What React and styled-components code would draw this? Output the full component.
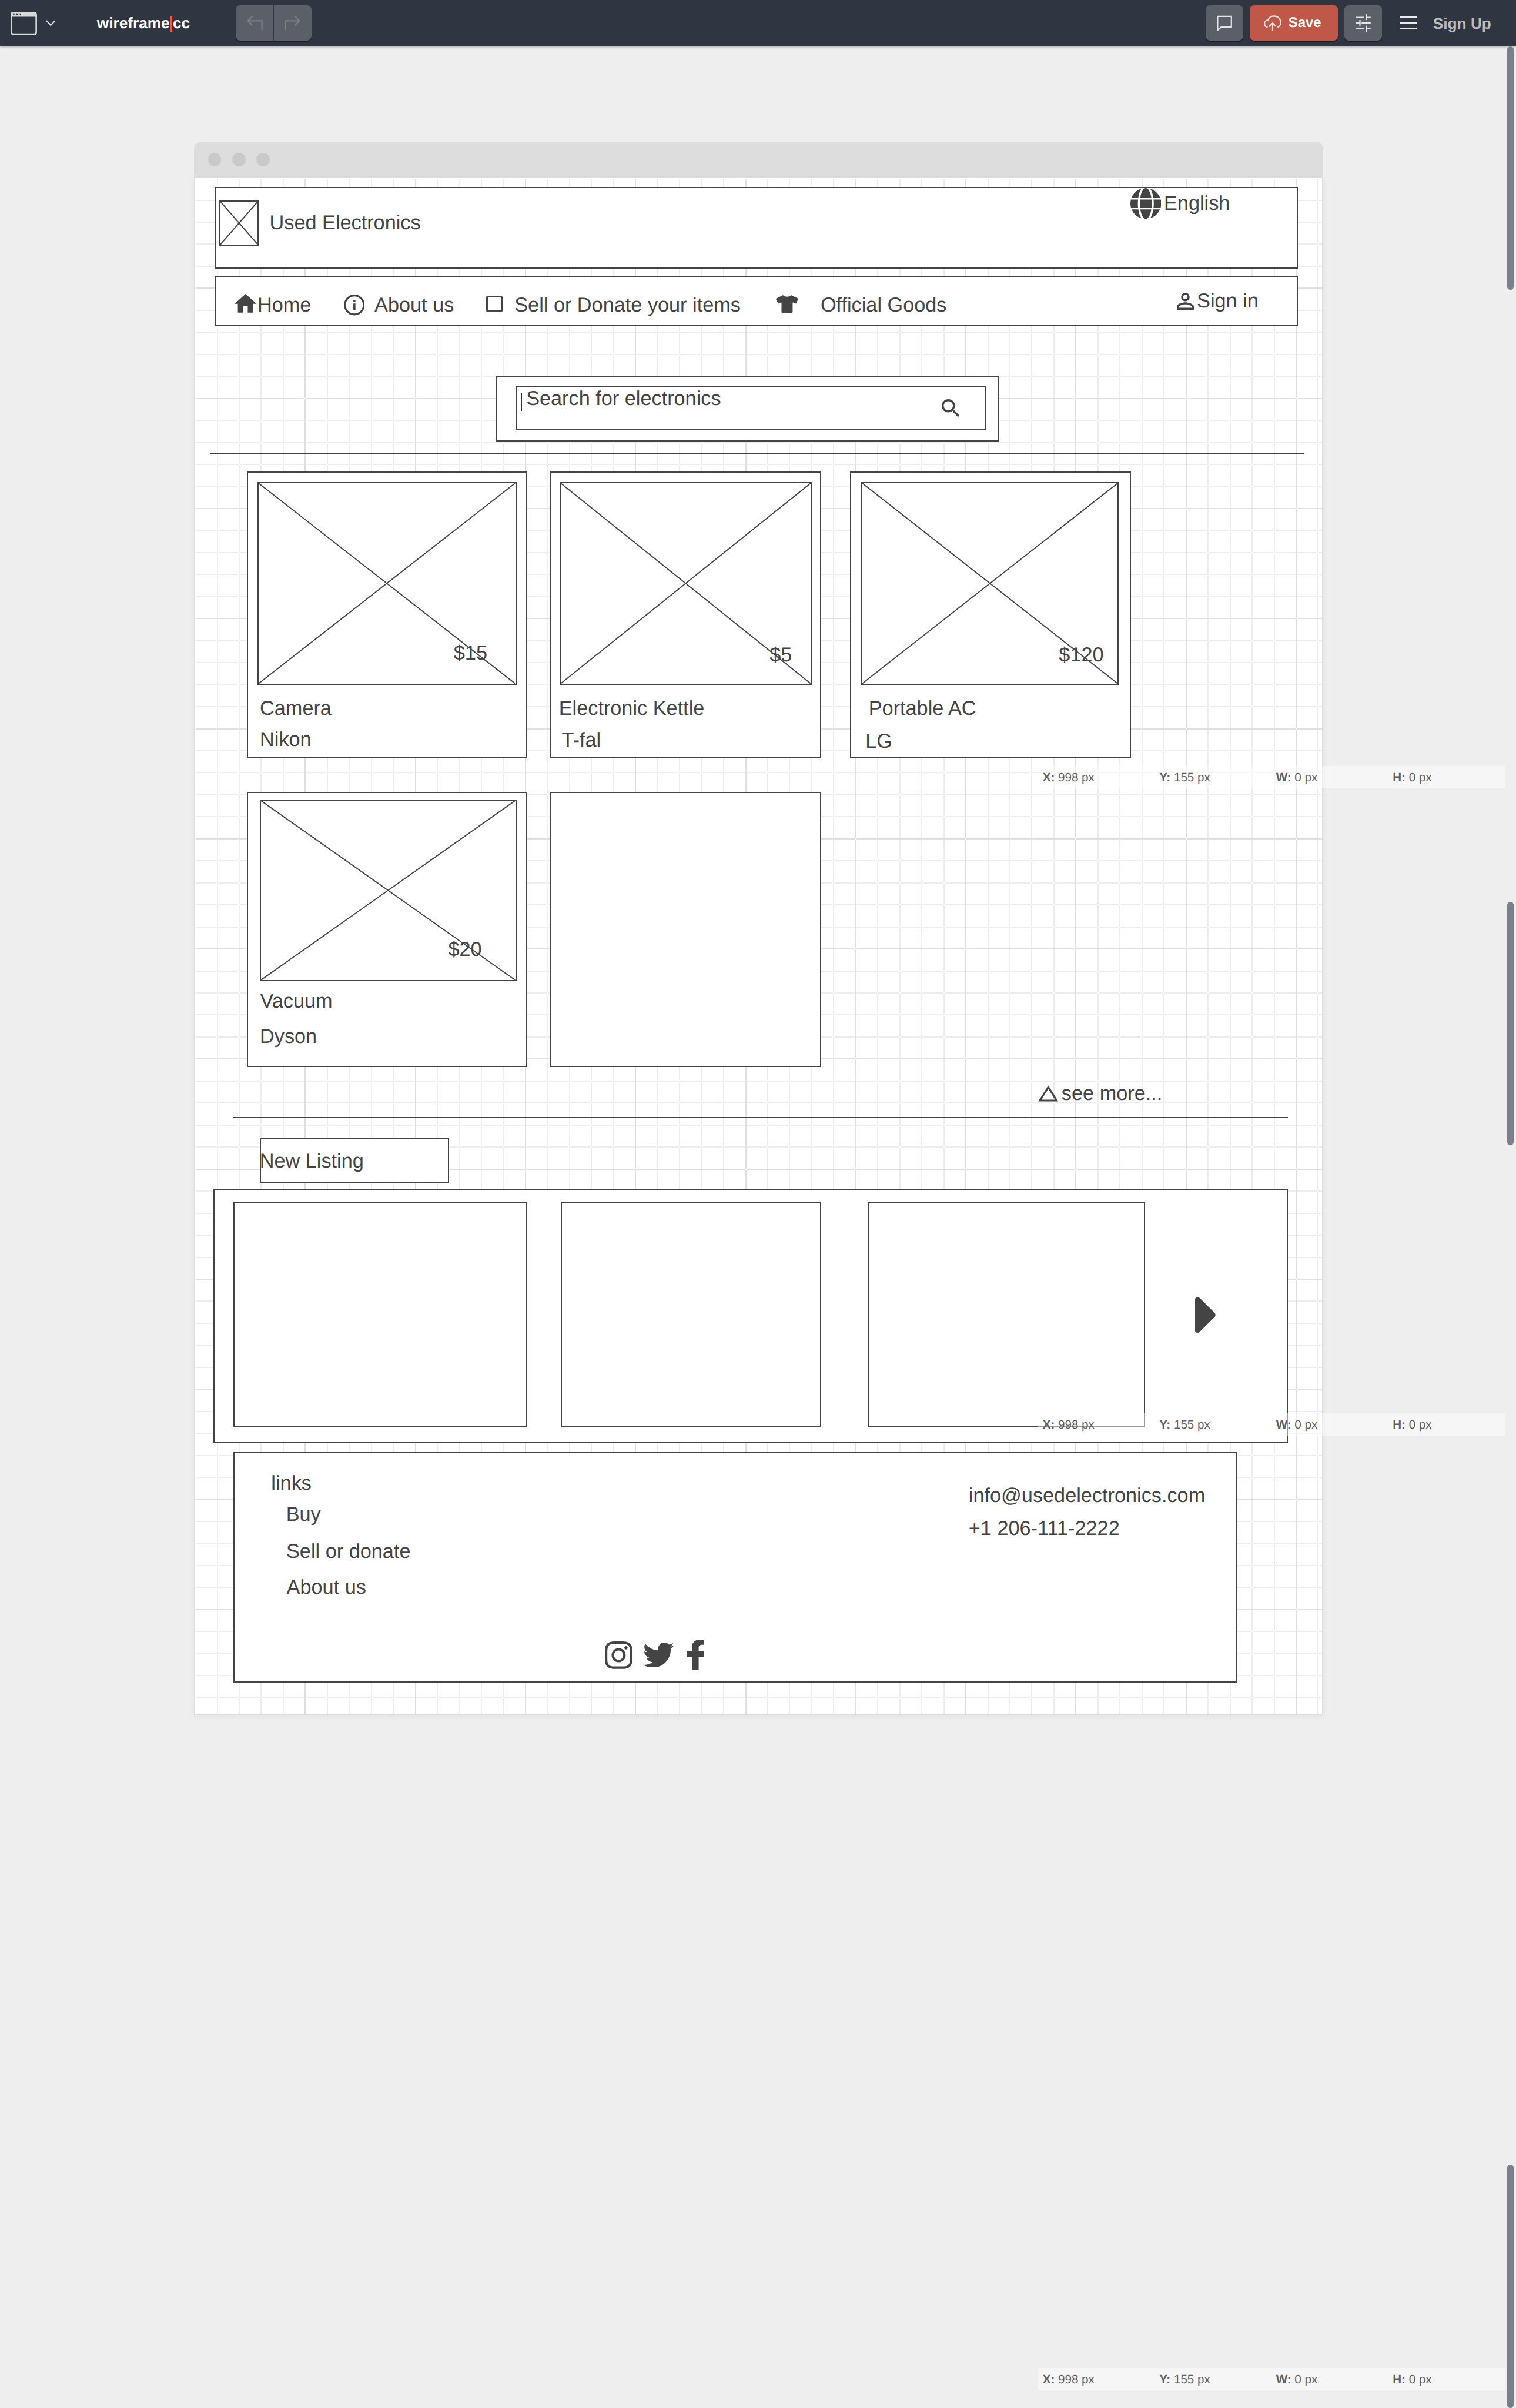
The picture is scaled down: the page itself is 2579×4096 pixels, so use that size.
import React from "react";
import styled, { createGlobalStyle } from "styled-components";
import { FaGlobe, FaTshirt, FaInstagram, FaTwitter, FaFacebookF } from "react-icons/fa";
import { MdHome, MdPersonOutline, MdSearch } from "react-icons/md";

const SCALE = 2579 / 2754;
const u = (n) => `${(n * SCALE).toFixed(3)}px`;

const INK = "#444444";
const LINE = "2px";

const GlobalStyle = createGlobalStyle`
  *, *::before, *::after { box-sizing: border-box; }
  html, body { margin: 0; padding: 0; background: #eeeeee; }
  body {
    font-family: "Liberation Sans", Arial, sans-serif;
    color: ${INK};
    text-rendering: geometricPrecision;
  }
  svg { display: block; flex: none; }
`;

const Page = styled.div`
  position: relative;
  width: ${u(2754)};
  height: 4096px;
  overflow: hidden;
  background: #eeeeee;
`;

/* ---------- toolbar ---------- */

const Toolbar = styled.header`
  position: relative;
  display: flex;
  align-items: flex-start;
  height: ${u(84)};
  padding: ${u(10)} ${u(45)} 0 ${u(19)};
  background: #2f3541;
  box-shadow: 0 1px 4px rgba(0, 0, 0, 0.3);
`;

const ToolGroup = styled.div`
  display: flex;
  align-items: center;
  height: ${u(64)};
  gap: ${(p) => u(p.$gap || 0)};
  margin-left: ${(p) => (p.$push ? "auto" : u(p.$ml || 0))};
`;

const Logo = styled.div`
  display: flex;
  align-items: center;
  width: ${u(252)};
  height: ${u(64)};
  margin-left: ${u(75)};
  padding-top: ${u(2)};
  font-size: ${u(28)};
  font-weight: 700;
  line-height: ${u(32)};
  color: #ffffff;
`;

const LogoBar = styled.span`
  width: 3px;
  height: ${u(28)};
  margin: ${u(1)} ${u(1)} 0 ${u(1.5)};
  background: #f05a40;
`;

const ToolButton = styled.button`
  display: flex;
  align-items: center;
  justify-content: center;
  gap: ${u(13)};
  width: ${(p) => u(p.$w || 68)};
  height: ${u(64)};
  padding: 0 ${(p) => u(p.$primary ? 5 : 0)} 0 0;
  border: 0;
  border-radius: ${(p) => p.$radius || u(8)};
  background: ${(p) => (p.$primary ? "#bf5848" : "#5b5f68")};
  box-shadow: 0 2px 0 #1b1d20;
  color: #ffffff;
  font: 700 ${u(25.5)} "Liberation Sans", Arial, sans-serif;
  text-rendering: inherit;
`;

const SignUp = styled.a`
  margin-left: ${u(18)};
  padding-top: ${u(2)};
  font-size: ${u(28)};
  font-weight: 700;
  color: #bbbbbb;
  white-space: nowrap;
`;

const Glyph = ({ w, h, box, children, color = "#e3e4e6", sw = 2.4 }) => (
  <svg
    width={w * SCALE}
    height={h * SCALE}
    viewBox={box || `0 0 ${w} ${h}`}
    fill="none"
    stroke={color}
    strokeWidth={sw}
  >
    {children}
  </svg>
);

/* ---------- browser window ---------- */

const Browser = styled.main`
  width: ${u(2052)};
  margin: ${u(174)} 0 0 ${u(352)};
`;

const BrowserBar = styled.div`
  display: flex;
  align-items: center;
  gap: ${u(20)};
  height: ${u(66)};
  padding: 0 0 ${u(2)} ${u(26)};
  border-radius: ${u(11)} ${u(11)} 0 0;
  background: #dddddd;
`;

const Dot = styled.i`
  width: ${u(24)};
  height: ${u(24)};
  border-radius: 50%;
  background: #c9c9c9;
`;

const Canvas = styled.div`
  position: relative;
  height: ${u(2792)};
  border: solid #dddddd;
  border-width: 0 ${LINE} ${LINE};
  background: #ffffff;
  box-shadow: 0 2px 10px rgba(0, 0, 0, 0.05);
`;

const GridSvg = styled.svg`
  position: absolute;
  inset: 0;
`;

const Content = styled.div`
  position: relative;
  display: flow-root;
`;

/* ---------- wireframe parts ---------- */

const Label = styled.span`
  display: block;
  flex: none;
  height: ${u(44)};
  margin: ${(p) => u(p.$mt || 0)} 0 0 ${(p) => u((p.$ml || 0) + 1.4)};
  font-size: ${u(36.6)};
  line-height: ${u(48.6)};
  white-space: nowrap;
  color: ${INK};
`;

const Frame = styled.section`
  position: relative;
  display: flex;
  flex: none;
  align-items: flex-start;
  width: ${(p) => u(p.$w)};
  height: ${(p) => u(p.$h)};
  margin: ${(p) => u(p.$mt || 0)} 0 0 ${(p) => u(p.$ml || 0)};
  border: ${LINE} solid ${INK};
  background: #ffffff;
`;

const Rule = styled.hr`
  width: ${(p) => u(p.$w)};
  height: 2px;
  margin: ${(p) => u(p.$mt)} 0 0 ${(p) => u(p.$ml)};
  border: 0;
  background: ${INK};
`;

const IconSlot = styled.span`
  display: block;
  flex: none;
  width: ${(p) => u(p.$w)};
  height: ${(p) => u(p.$h)};
  margin: ${(p) => u(p.$mt || 0)} 0 0 ${(p) => u(p.$ml || 0)};
  color: ${INK};

  svg {
    width: 100%;
    height: 100%;
  }
`;

const Language = styled.div`
  display: flex;
  width: ${u(303)};
  margin-left: auto;
`;

const NavFrame = styled(Frame)`
  display: grid;
  grid-template-columns: ${u(202)} ${u(258)} ${u(528)} ${u(728)} 1fr;
  padding-left: ${u(30)};
`;

const NavItem = styled.div`
  display: flex;
  align-items: flex-start;
`;

const SearchFrame = styled(Frame)`
  padding: ${u(18)} 0 0 ${u(34)};
`;

const Caret = styled.i`
  width: 2px;
  height: ${u(32)};
  margin: ${u(10)} 0 0 ${u(8)};
  background: #333333;
`;

const SearchIcon = styled(IconSlot)`
  margin-left: auto;
  margin-right: ${u(47)};
`;

const CardRow = styled.div`
  display: flex;
  margin: ${(p) => u(p.$mt)} 0 0 ${u(94)};
`;

const Card = styled(Frame)`
  flex-direction: column;
`;

const CrossBox = styled.div`
  flex: none;
  width: ${(p) => u(p.$w)};
  height: ${(p) => u(p.$h)};
  margin: ${(p) => u(p.$mt)} 0 0 ${(p) => u(p.$ml)};
  border: ${LINE} solid ${INK};
  background: #ffffff;

  svg {
    width: 100%;
    height: 100%;
  }
`;

const Price = styled(Label)`
  position: absolute;
  left: ${(p) => u(p.$x)};
  top: ${(p) => u(p.$y)};
`;

const SeeMore = styled.div`
  display: flex;
  margin: ${u(24.5)} 0 0 ${u(1531.5)};
`;

const FooterFrame = styled(Frame)`
  flex-direction: column;
`;

const FooterColumns = styled.div`
  display: grid;
  grid-template-columns: ${u(1332)} auto;
  height: ${u(263)};
`;

const Column = styled.div`
  display: flex;
  flex-direction: column;
`;

const Social = styled.div`
  display: flex;
  margin: ${u(75)} 0 0 ${u(673)};
`;

/* ---------- overlays ---------- */

const Readout = styled.div`
  position: absolute;
  left: ${u(1886)};
  top: ${(p) => u(p.$y)};
  display: grid;
  grid-template-columns: repeat(4, ${u(212)});
  width: ${u(848)};
  height: ${u(41)};
  background: rgba(255, 255, 255, 0.45);
  color: #606060;
  font-size: ${u(22)};
  line-height: ${u(42)};
  white-space: nowrap;

  span {
    padding-left: ${u(8)};
  }
`;

const Thumb = styled.div`
  position: absolute;
  left: ${u(2738)};
  top: ${(p) => u(p.$y)};
  width: ${u(12)};
  height: ${u(442)};
  border-radius: ${u(6)};
  background: #7b7f88;
`;

function GridLines() {
  const width = 2048 * SCALE;
  const height = 2790 * SCALE;
  const minor = [];
  const major = [];
  for (let k = 1; k * 40 < 2048; k += 1) {
    const x = Math.round((k * 40 - 1) * SCALE);
    (k % 5 ? minor : major).push(`M${x} 2h2V${height}h-2z`);
  }
  for (let k = 1; k * 40 < 2790; k += 1) {
    const y = Math.round((k * 40 - 1) * SCALE);
    (k % 5 ? minor : major).push(`M1 ${y}v2H${width}v-2z`);
  }
  return (
    <GridSvg width={width} height={height} shapeRendering="crispEdges">
      <path d={minor.join("")} fill="#ededed" />
      <path d={major.join("")} fill="#e0e0e0" />
    </GridSvg>
  );
}

function Crossed(props) {
  return (
    <CrossBox {...props}>
      <svg viewBox="0 0 100 100" preserveAspectRatio="none">
        <path
          d="M0 0L100 100M100 0L0 100"
          stroke={INK}
          strokeWidth="1.9"
          vectorEffect="non-scaling-stroke"
        />
      </svg>
    </CrossBox>
  );
}

function Product({ w, ml, h = 520, image, price, name, maker }) {
  return (
    <Card $w={w} $h={h} $ml={ml}>
      <Crossed $w={image.w} $h={image.h} $mt={image.mt} $ml={image.ml} />
      <Price $x={price.x} $y={price.y}>{price.text}</Price>
      <Label $mt={name.mt} $ml={name.ml}>{name.text}</Label>
      <Label $mt={maker.mt} $ml={maker.ml}>{maker.text}</Label>
    </Card>
  );
}

const readings = [["X", 998], ["Y", 155], ["W", 0], ["H", 0]];

const Coordinates = ({ y }) => (
  <Readout $y={y}>
    {readings.map(([key, value]) => (
      <span key={key}>
        <b>{key}:</b> {value} px
      </span>
    ))}
  </Readout>
);

const stretch = { preserveAspectRatio: "none" };

export default function App() {
  return (
    <Page>
      <GlobalStyle />
      <Toolbar>
        <ToolGroup $gap={16}>
          <Glyph w={48} h={42} color="none">
            <path
              fillRule="evenodd"
              fill="#d7d8da"
              d="M5 0H43Q48 0 48 5V37Q48 42 43 42H5Q0 42 0 37V5Q0 0 5 0ZM2.8 9V37Q2.8 39.2 5 39.2H43Q45.2 39.2 45.2 37V9ZM4.5 3v3h2.6v-3zM10.5 3v3h2.6v-3zM16.7 3v3h2.6v-3z"
            />
          </Glyph>
          <Glyph w={18} h={11} color="#d7d8da">
            <path d="M1 1L9 9.5L17 1" />
          </Glyph>
        </ToolGroup>
        <Logo>
          wireframe<LogoBar />cc
        </Logo>
        <ToolGroup $gap={2}>
          <ToolButton $radius={`${u(8)} 0 0 ${u(8)}`}>
            <Glyph w={30} h={28} color="#7e7f7f">
              <path d="M11 1.5L3 10L11 18.5M3 10H28.5V27" />
            </Glyph>
          </ToolButton>
          <ToolButton $radius={`0 ${u(8)} ${u(8)} 0`}>
            <Glyph w={30} h={28} color="#7e7f7f">
              <path d="M19 1.5L27 10L19 18.5M27 10H1.5V27" />
            </Glyph>
          </ToolButton>
        </ToolGroup>
        <ToolGroup $push $gap={12}>
          <ToolButton>
            <Glyph w={28} h={28}>
              <path d="M1.5 2H26.5V21.5H8L1.5 27Z" />
            </Glyph>
          </ToolButton>
          <ToolButton $primary $w={160}>
            <Glyph w={32} h={28} color="#f6dfdb">
              <path d="M7 22C3 21 1.2 18 1.2 15C1.2 11.5 4 9 7.8 8.8C9 4 13.5 1.4 18.5 1.4C25.5 1.4 30.6 6.6 30.6 13.2C30.6 17.5 28 20.5 25 22M16 28V14M9.5 20.5L16 14L22.5 20.5" />
            </Glyph>
            Save
          </ToolButton>
          <ToolButton>
            <Glyph w={28} h={32}>
              <path d="M.5 6H16M20 0V11M20 6H27.5M.5 16H8M8 10.8V21.2M11 16H27.5M.5 26.3H16M20 21V32M20 26.3H27.5" />
            </Glyph>
          </ToolButton>
          <ToolGroup $ml={20}>
            <Glyph w={31} h={26} color="#e9e9ea" sw={2.8}>
              <path d="M0 2H31M0 12.6H31M0 23.2H31" />
            </Glyph>
          </ToolGroup>
          <SignUp>Sign Up</SignUp>
        </ToolGroup>
      </Toolbar>

      <Browser>
        <BrowserBar>
          <Dot />
          <Dot />
          <Dot />
        </BrowserBar>
        <Canvas>
          <GridLines />
          <Content>
            <Frame $w={1968} $h={148} $mt={16} $ml={36}>
              <Crossed $w={72} $h={82} $mt={22} $ml={6} />
              <Label $mt={39} $ml={18}>Used Electronics</Label>
              <Language>
                <IconSlot $w={56} $h={56} $mt={-0.5}>
                  <FaGlobe viewBox="0 8 496 496" {...stretch} />
                </IconSlot>
                <Label $mt={3.5} $ml={4}>English</Label>
              </Language>
            </Frame>

            <NavFrame as="nav" $w={1968} $h={90} $mt={14} $ml={36}>
              <NavItem>
                <IconSlot $w={40} $h={34} $mt={30} $ml={4}>
                  <MdHome viewBox="2 3 20 17" {...stretch} />
                </IconSlot>
                <Label $mt={27} $ml={0}>Home</Label>
              </NavItem>
              <NavItem>
                <IconSlot $w={38} $h={38} $mt={31} $ml={0.3}>
                  <svg viewBox="0 0 38 38">
                    <circle cx="19" cy="19" r="17.2" fill="none" stroke={INK} strokeWidth="3.4" />
                    <path d="M17.2 9.5h3.8v4h-3.8zM17.2 16.3h3.8v12h-3.8z" fill={INK} />
                  </svg>
                </IconSlot>
                <Label $mt={27} $ml={16.4}>About us</Label>
              </NavItem>
              <NavItem>
                <IconSlot $w={30} $h={30} $mt={33} $ml={1}>
                  <svg viewBox="0 0 30 30">
                    <rect x="1.6" y="1.6" width="26.8" height="26.8" rx="2" fill="none" stroke={INK} strokeWidth="3.2" />
                  </svg>
                </IconSlot>
                <Label $mt={27} $ml={20}>Sell or Donate your items</Label>
              </NavItem>
              <NavItem>
                <IconSlot $w={40.5} $h={32.4} $mt={32} $ml={-0.5}>
                  <FaTshirt viewBox="0 0 640 512" {...stretch} />
                </IconSlot>
                <Label $mt={27} $ml={39}>Official Goods</Label>
              </NavItem>
              <NavItem>
                <IconSlot $w={31} $h={31} $mt={27.5}>
                  <MdPersonOutline viewBox="4 4 16 16" {...stretch} />
                </IconSlot>
                <Label $mt={19} $ml={3.6}>Sign in</Label>
              </NavItem>
            </NavFrame>

            <SearchFrame $w={914} $h={120} $mt={90} $ml={546}>
              <Frame as="div" $w={856} $h={80}>
                <Caret />
                <Label $mt={-3.5} $ml={6}>Search for electronics</Label>
                <SearchIcon $w={32.4} $h={32.4} $mt={21}>
                  <MdSearch viewBox="3 3 17.49 17.49" {...stretch} />
                </SearchIcon>
              </Frame>
            </SearchFrame>

            <Rule $w={1986} $mt={20} $ml={28} />

            <CardRow $mt={32}>
              <Product
                w={510}
                image={{ w: 470, h: 368, mt: 18, ml: 18 }}
                price={{ text: "$15", x: 372.5, y: 305 }}
                name={{ text: "Camera", mt: 19, ml: 20.4 }}
                maker={{ text: "Nikon", mt: 12.2, ml: 20.4 }}
              />
              <Product
                w={494}
                ml={40}
                image={{ w: 458, h: 368, mt: 18, ml: 16 }}
                price={{ text: "$5", x: 396.4, y: 307.4 }}
                name={{ text: "Electronic Kettle", mt: 19, ml: 13.6 }}
                maker={{ text: "T-fal", mt: 14.2, ml: 18.8 }}
              />
              <Product
                w={510}
                ml={52}
                image={{ w: 468, h: 368, mt: 18, ml: 18 }}
                price={{ text: "$120", x: 376, y: 307.4 }}
                name={{ text: "Portable AC", mt: 19, ml: 30.4 }}
                maker={{ text: "LG", mt: 16, ml: 24.6 }}
              />
            </CardRow>

            <CardRow $mt={62}>
              <Product
                w={510}
                h={500}
                image={{ w: 466, h: 330, mt: 12, ml: 22 }}
                price={{ text: "$20", x: 362.5, y: 261.3 }}
                name={{ text: "Vacuum", mt: 13, ml: 20.8 }}
                maker={{ text: "Dyson", mt: 20, ml: 20.4 }}
              />
              <Card $w={494} $h={500} $ml={40} />
            </CardRow>

            <SeeMore>
              <IconSlot $w={37} $h={29.5} $mt={9}>
                <svg viewBox="0 0 37 29.5">
                  <path d="M18.5 3.4L33.8 27.8H3.2Z" fill="none" stroke={INK} strokeWidth="3.4" />
                </svg>
              </IconSlot>
              <Label $ml={4.4}>see more...</Label>
            </SeeMore>

            <Rule $w={1916} $mt={22.5} $ml={70} />

            <Frame $w={344} $h={84} $mt={35} $ml={118}>
              <Label $mt={17} $ml={-4}>New Listing</Label>
            </Frame>

            <Frame $w={1952} $h={462} $mt={10} $ml={34}>
              <Frame as="div" $w={534} $h={408} $mt={22} $ml={34} />
              <Frame as="div" $w={474} $h={408} $mt={22} $ml={60} />
              <Frame as="div" $w={504} $h={408} $mt={22} $ml={84} />
              <IconSlot $w={37} $h={65.5} $mt={193} $ml={91}>
                <svg viewBox="0 0 37 65.5">
                  <path
                    d="M0 5C0 .4 5 -1.4 8.3 1.9L35.2 28.6C37.6 31 37.6 34.5 35.2 36.9L8.3 63.6C5 66.9 0 65.1 0 60.5Z"
                    fill={INK}
                  />
                </svg>
              </IconSlot>
            </Frame>

            <FooterFrame as="footer" $w={1824} $h={418} $mt={16} $ml={70}>
              <FooterColumns>
                <Column>
                  <Label $mt={31} $ml={65}>links</Label>
                  <Label $mt={12} $ml={92}>Buy</Label>
                  <Label $mt={23.6} $ml={92.4}>Sell or donate</Label>
                  <Label $mt={20.4} $ml={93}>About us</Label>
                </Column>
                <Column>
                  <Label $mt={53}>info@usedelectronics.com</Label>
                  <Label $mt={16}>+1 206-111-2222</Label>
                </Column>
              </FooterColumns>
              <Social>
                <IconSlot $w={50} $h={50} $mt={3}>
                  <FaInstagram viewBox="0 32 448 448" {...stretch} />
                </IconSlot>
                <IconSlot $w={56} $h={45.5} $mt={5} $ml={18.5}>
                  <FaTwitter viewBox="0 48 512 416" {...stretch} />
                </IconSlot>
                <IconSlot $w={31} $h={56} $ml={24}>
                  <FaFacebookF viewBox="22.9 0 256.3 512" {...stretch} />
                </IconSlot>
              </Social>
            </FooterFrame>
          </Content>
        </Canvas>
      </Browser>

      <Coordinates y={1391} />
      <Coordinates y={2567} />
      <Coordinates y={4301} />

      <Thumb $y={84} />
      <Thumb $y={1638} />
      <Thumb $y={3932} />
    </Page>
  );
}
